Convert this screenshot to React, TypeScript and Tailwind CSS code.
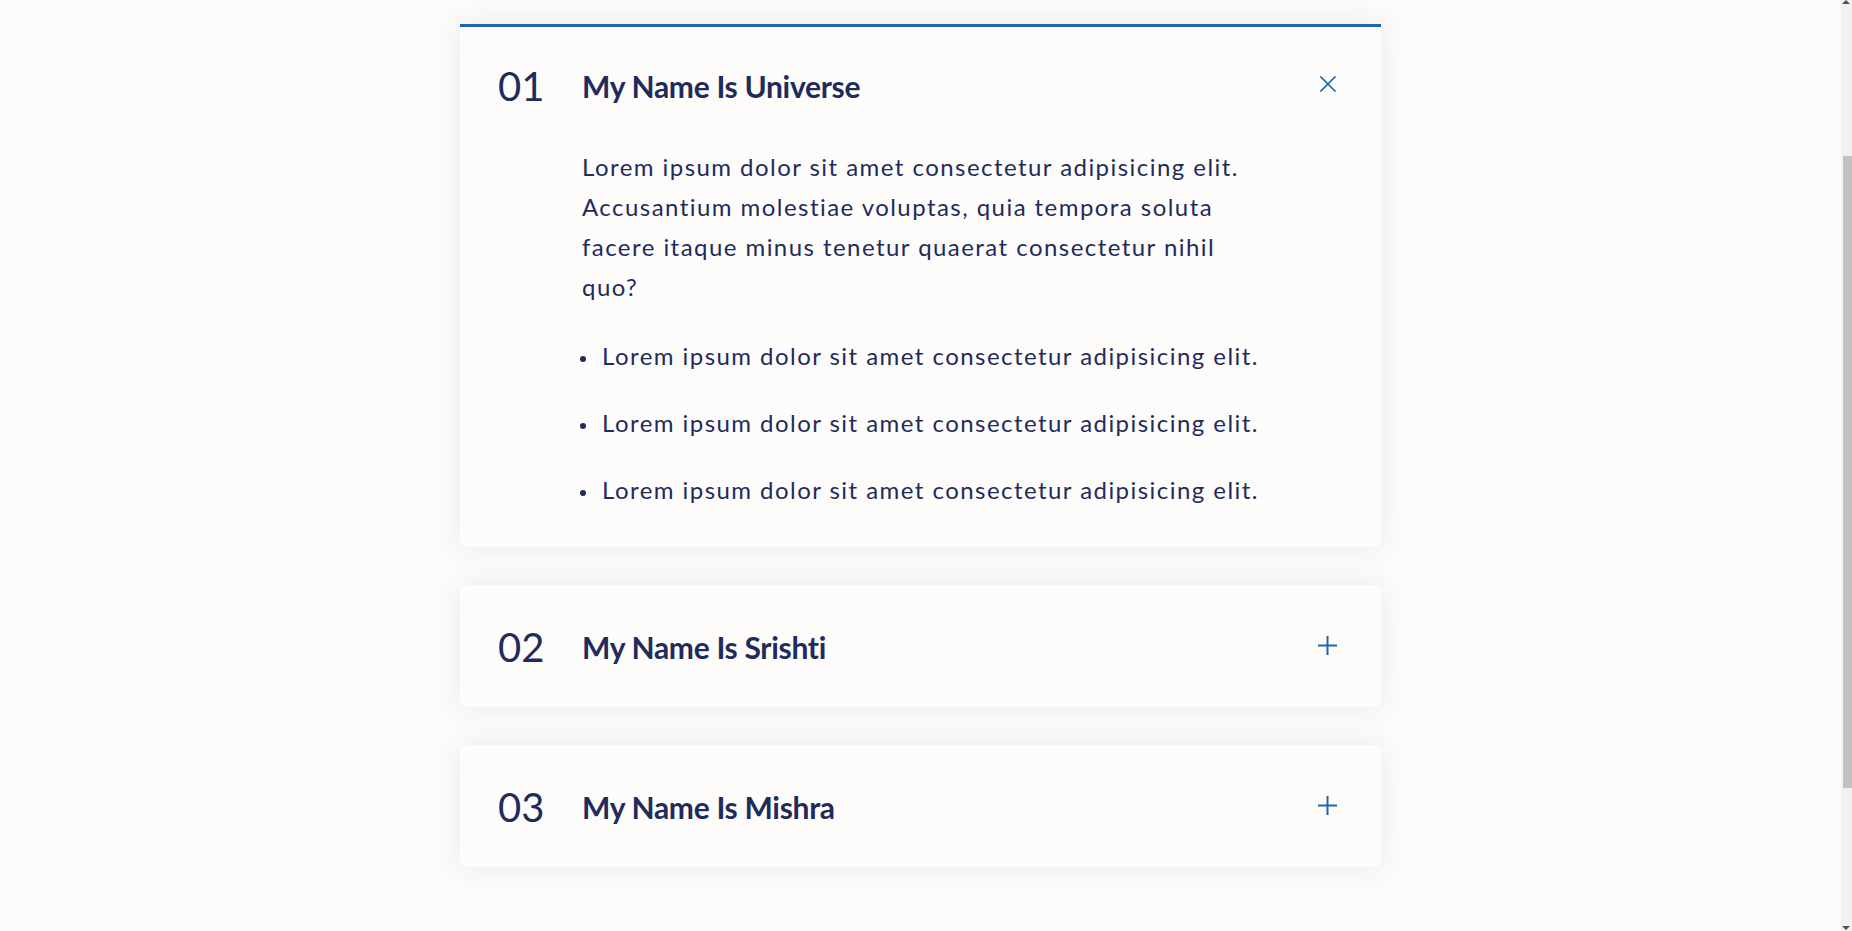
import React, { useLayoutEffect, useState } from "react";

type Item = { num: string; title: string };

const items: Item[] = [
  { num: "01", title: "My Name Is Universe" },
  { num: "02", title: "My Name Is Srishti" },
  { num: "03", title: "My Name Is Mishra" },
];

const bullet = "Lorem ipsum dolor sit amet consectetur adipisicing elit.";

const CloseIcon = () => (
  <svg width="16" height="16" viewBox="0 0 16 16" className="block">
    <path d="M1 1L15 15M15 1L1 15" stroke="#1a66b0" strokeWidth="1.6" strokeLinecap="square" fill="none" />
  </svg>
);

const PlusIcon = () => (
  <svg width="19" height="19" viewBox="0 0 19 19" className="block">
    <path d="M9.5 0V19M0 9.5H19" stroke="#1a66b0" strokeWidth="2" fill="none" />
  </svg>
);

// classic scrollbar look, page scrolled part-way down
const ScrollBar = () => (
  <div className="fixed top-0 right-0 h-screen w-[11px] bg-[#f1f1f1] flex flex-col">
    <svg width="11" height="4" viewBox="0 0 11 4" className="block shrink-0">
      <path d="M5 0L9 4H1Z" fill="#505050" />
    </svg>
    <div className="h-[152px] shrink-0" />
    <div className="h-[632px] ml-[2px] bg-[#c1c1c1] shrink-0" />
    <div className="flex-1" />
    <svg width="11" height="4" viewBox="0 0 11 4" className="block shrink-0 mb-[1px]">
      <path d="M1 0H9L5 4Z" fill="#505050" />
    </svg>
  </div>
);

const App = () => {
  const [open, setOpen] = useState(0);

  useLayoutEffect(() => {
    window.scrollTo(0, 205);
  }, []);

  return (
    <div className="min-h-screen bg-[#fcfbfa] font-['Lato',sans-serif] text-[#1f2b5b]">
      <div className="mr-[11px] pt-[229px] pb-[258px]">
        <div className="w-[921px] mx-auto flex flex-col gap-[38px]">
          {items.map((item, i) => {
            const isOpen = open === i;
            return (
              <div
                key={item.num}
                className={
                  isOpen
                    ? "bg-[#fdfcfb] rounded-b-md border-t-[3px] border-[#1a66b0] shadow-[0_0_30px_rgba(0,0,0,0.07)]"
                    : "bg-[#fdfcfb] rounded-md border-t-[3px] border-transparent shadow-[0_0_30px_rgba(0,0,0,0.07)]"
                }
              >
                <button
                  onClick={() => setOpen(isOpen ? -1 : i)}
                  className="w-full h-[119px] pb-[2px] flex items-center pl-[38px] pr-[44px] text-left"
                >
                  <span className="w-[84px] text-[40px] font-normal leading-[1.2]">{item.num}</span>
                  <span className="flex-1 text-[30px] font-bold leading-[1.2] tracking-[-0.3px]">{item.title}</span>
                  <span className="w-[19px] mb-[3px] flex justify-center">
                    {isOpen ? <CloseIcon /> : <PlusIcon />}
                  </span>
                </button>
                {isOpen && (
                  <div className="pl-[122px] pb-[37px] text-[24px] leading-[40px] tracking-[1.45px]">
                    <p className="mt-[1px] max-w-[670px]">
                      Lorem ipsum dolor sit amet consectetur adipisicing elit. Accusantium molestiae voluptas, quia
                      tempora soluta facere itaque minus tenetur quaerat consectetur nihil quo?
                    </p>
                    <ul className="mt-[29px] flex flex-col gap-[27px]">
                      {[0, 1, 2].map((k) => (
                        <li key={k} className="flex items-center">
                          <span className="w-[6px] h-[6px] shrink-0 rounded-full bg-[#1f2b5b] ml-[-2px] mr-[16px] mt-[6px]" />
                          <span>{bullet}</span>
                        </li>
                      ))}
                    </ul>
                  </div>
                )}
              </div>
            );
          })}
        </div>
      </div>
      <ScrollBar />
    </div>
  );
};

export default App;
